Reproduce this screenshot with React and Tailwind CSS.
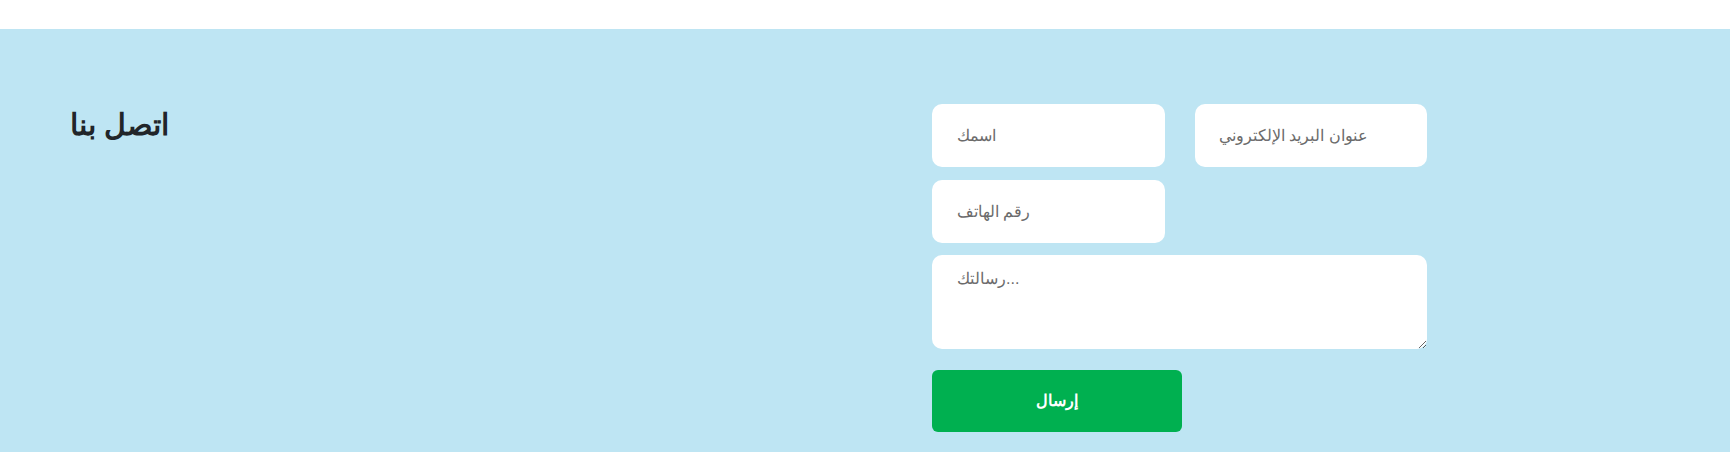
export default function App() {
  return (
    <div className="w-full h-[462px] bg-white font-['Liberation_Sans',Arial,sans-serif]">
      <div className="h-[29px] bg-white" />
      <section className="flex bg-[#bee5f3] pt-[75px] pb-[20px]">
        <div className="w-[932px] pl-[70px]">
          <h2 className="mt-[3px] text-[30px] font-bold leading-[36px] text-[#212529]">اتصل بنا</h2>
        </div>
        <form className="w-[495px]" onSubmit={(e) => e.preventDefault()}>
          <div className="flex flex-wrap gap-x-[30px] gap-y-[13px]">
            <input
              type="text"
              placeholder="اسمك"
              className="h-[63px] w-[233px] rounded-[10px] bg-white px-[25px] text-base text-[#333] outline-none placeholder:text-[#6b6b6b]"
            />
            <input
              type="email"
              placeholder="عنوان البريد الإلكتروني"
              className="h-[63px] w-[232px] rounded-[10px] bg-white px-[24px] text-base text-[#333] outline-none placeholder:text-[#6b6b6b]"
            />
            <input
              type="tel"
              placeholder="رقم الهاتف"
              className="h-[63px] w-[233px] rounded-[10px] bg-white px-[25px] text-base text-[#333] outline-none placeholder:text-[#6b6b6b]"
            />
          </div>
          <textarea
            placeholder="رسالتك..."
            className="mt-[12px] block h-[94px] w-[495px] rounded-[10px] bg-white px-[25px] pt-[12px] text-base text-[#333] outline-none placeholder:text-[#6b6b6b]"
          />
          <button
            type="submit"
            className="mt-[21px] block h-[62px] w-[250px] rounded-[6px] bg-[#00b050] text-base font-bold text-white"
          >
            إرسال
          </button>
        </form>
      </section>
    </div>
  );
}
